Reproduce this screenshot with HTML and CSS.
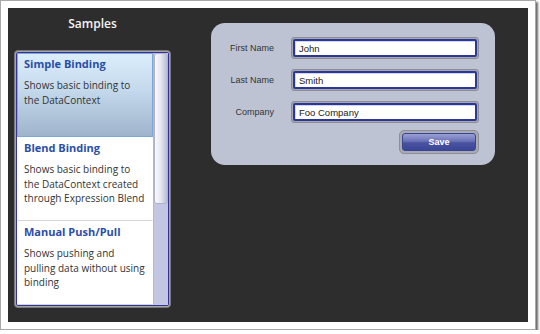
FILE: index.html
```html
<!DOCTYPE html>
<html lang="en">
<head>
    <meta charset="UTF-8">
    <meta name="viewport" content="width=device-width, initial-scale=1.0">
    <title>Samples</title>
    <link rel="stylesheet" href="styles.css">
</head>
<body>
    <div class="frame">
        <div class="app">
            <div class="samples">
                <h1>Samples</h1>
                <div class="list">
                    <div class="list-inner">
                        <div class="items">
                            <div class="item selected">
                                <h2>Simple Binding</h2>
                                <p>Shows basic binding to the DataContext</p>
                            </div>
                            <div class="item">
                                <h2>Blend Binding</h2>
                                <p>Shows basic binding to the DataContext created through Expression Blend</p>
                            </div>
                            <div class="item">
                                <h2>Manual Push/Pull</h2>
                                <p>Shows pushing and pulling data without using binding</p>
                            </div>
                        </div>
                        <div class="scrollbar">
                            <div class="thumb"></div>
                        </div>
                    </div>
                </div>
            </div>
            <div class="form">
                <div class="row">
                    <label for="first-name">First Name</label>
                    <div class="field"><input type="text" id="first-name" value="John"></div>
                </div>
                <div class="row">
                    <label for="last-name">Last Name</label>
                    <div class="field"><input type="text" id="last-name" value="Smith"></div>
                </div>
                <div class="row">
                    <label for="company">Company</label>
                    <div class="field"><input type="text" id="company" value="Foo Company"></div>
                </div>
                <div class="actions">
                    <div class="button"><button type="button">Save</button></div>
                </div>
            </div>
        </div>
    </div>
</body>
</html>
```

FILE: styles.css
```css
body {
    margin: 0;
    padding: 0;
    background-color: #fff;
    font-family: 'DejaVu Sans', 'Open Sans', sans-serif;
}

.frame {
    width: 536px;
    height: 330px;
    box-sizing: border-box;
    padding: 7px;
    background-color: #fff;
    border: 1px solid #a8a8a8;
    box-shadow: 2px 2px 2px #6a6a6a;
}

.app {
    display: flex;
    gap: 40px;
    height: 100%;
    padding-left: 6px;
    background-color: #2d2d2d;
}

.samples {
    width: 157px;
}

.samples h1 {
    margin: 0 0 10px 0;
    height: 32px;
    line-height: 32px;
    text-align: center;
    font-family: 'Open Sans', sans-serif;
    font-size: 12px;
    font-weight: 600;
    color: #f4f4f4;
}

.list {
    height: 258px;
    box-sizing: border-box;
    padding: 1px;
    border: 1px solid #7a7a7a;
    border-radius: 4px;
    background-color: #a4a4a8;
}

.list-inner {
    display: flex;
    height: 100%;
    box-sizing: border-box;
    border: 1px solid #33349a;
    border-radius: 2px;
    background-color: #fff;
    overflow: hidden;
}

.items {
    flex: 1;
}

.item {
    height: 84px;
    box-sizing: border-box;
    padding: 2px 5px 0 6px;
    border: 1px solid transparent;
    border-bottom-color: #d4d4d4;
}

.item.selected {
    border-color: #7ea6d6;
    background: linear-gradient(#dbeefc, #c4d8ec 45%, #9fb3cb);
}

.item h2 {
    margin: 0;
    font-family: 'Open Sans', sans-serif;
    font-size: 11px;
    font-weight: 700;
    line-height: 16px;
    color: #2a4ea6;
}

.item p {
    margin: 6px 0 0 0;
    font-family: 'Open Sans', sans-serif;
    font-size: 10px;
    line-height: 14.5px;
    color: #333;
}

.scrollbar {
    width: 14px;
    background-color: #c3c6e2;
    border-left: 1px solid #b4b7d0;
}

.thumb {
    height: 151px;
    box-sizing: border-box;
    border: 1px solid #b0b3c8;
    border-radius: 3px;
    background: linear-gradient(90deg, #fafafc, #e4e5f0 50%, #b8bbd4);
}

.form {
    width: 284px;
    height: 142px;
    box-sizing: border-box;
    margin-top: 15px;
    padding: 14px 16px 0 0;
    border-radius: 14px;
    background-color: #bdc3d3;
    display: flex;
    flex-direction: column;
    gap: 10px;
}

.row {
    display: flex;
    align-items: center;
    gap: 17px;
}

.row label {
    width: 63px;
    text-align: right;
    font-family: 'Liberation Sans', sans-serif;
    font-size: 9px;
    color: #333;
}

.field {
    width: 188px;
    height: 22px;
    box-sizing: border-box;
    padding: 1px;
    border: 1px solid #8e8e92;
    border-radius: 3px;
    background-color: #a6a8b0;
}

.field input {
    display: block;
    width: 100%;
    height: 100%;
    box-sizing: border-box;
    margin: 0;
    padding: 0 0 0 4px;
    border: 2px solid #2c3898;
    border-radius: 2px;
    box-shadow: inset 1px 1px 0 #cfd3ee;
    background-color: #fff;
    font-family: 'Liberation Sans', sans-serif;
    font-size: 9.5px;
    color: #1a1a1a;
    outline: none;
}

.actions {
    display: flex;
    justify-content: flex-end;
    margin-top: -3px;
}

.button {
    width: 80px;
    height: 24px;
    box-sizing: border-box;
    padding: 2px;
    border: 1px solid #8e8e94;
    border-radius: 5px;
    background-color: #a8aab4;
}

.button button {
    display: block;
    width: 100%;
    height: 100%;
    margin: 0;
    padding: 0;
    border: 1px solid #3a4494;
    border-radius: 3px;
    background: linear-gradient(#9aa0d4, #6a72b8 45%, #4a539f 55%, #3c4698);
    font-family: 'Liberation Sans', sans-serif;
    font-size: 9px;
    font-weight: 700;
    color: #fff;
}
```
